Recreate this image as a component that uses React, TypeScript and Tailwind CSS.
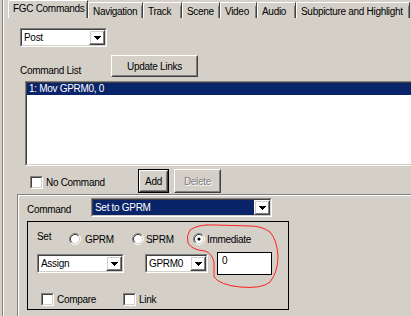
import React from 'react';

type BoxProps = { className?: string; children?: React.ReactNode };

const Raised = ({ className = '', children }: BoxProps) => (
    <div className={`border border-t-white border-l-white border-r-[#404040] border-b-[#404040] ${className}`}>
        <div className="w-full h-full border border-t-[#d4d0c8] border-l-[#d4d0c8] border-r-[#808080] border-b-[#808080] flex items-center justify-center">
            {children}
        </div>
    </div>
);

const Sunken = ({ className = '', children }: BoxProps) => (
    <div className={`border border-t-[#808080] border-l-[#808080] border-r-white border-b-white ${className}`}>
        <div className="w-full h-full border border-t-[#404040] border-l-[#404040] border-r-[#d4d0c8] border-b-[#d4d0c8] bg-white overflow-hidden">
            {children}
        </div>
    </div>
);

const Arrow = () => (
    <svg width="7" height="4" viewBox="0 0 7 4" shapeRendering="crispEdges">
        <rect x="0" y="0" width="7" height="1" fill="#000" />
        <rect x="1" y="1" width="5" height="1" fill="#000" />
        <rect x="2" y="2" width="3" height="1" fill="#000" />
        <rect x="3" y="3" width="1" height="1" fill="#000" />
    </svg>
);

const Combo = ({ className = '', text, selected = false }: { className?: string; text: string; selected?: boolean }) => (
    <Sunken className={className}>
        <div className="flex h-full">
            <div className={`flex-1 flex items-center pl-[2px] leading-[13px] ${selected ? 'bg-[#0a246a] text-white' : ''}`}>{text}</div>
            <Raised className="w-[16px] h-full shrink-0">
                <Arrow />
            </Raised>
        </div>
    </Sunken>
);

const Check = () => <Sunken className="w-[13px] h-[13px] shrink-0" />;

const Radio = ({ checked = false }: { checked?: boolean }) => (
    <svg width="12" height="12" viewBox="0 0 12 12" className="shrink-0">
        <circle cx="6" cy="6" r="4.5" fill="#fff" />
        <path d="M2.11 9.89A5.5 5.5 0 0 1 9.89 2.11" stroke="#808080" fill="none" />
        <path d="M2.82 9.18A4.5 4.5 0 0 1 9.18 2.82" stroke="#404040" fill="none" />
        <path d="M9.89 2.11A5.5 5.5 0 0 1 2.11 9.89" stroke="#fff" fill="none" />
        <path d="M9.18 2.82A4.5 4.5 0 0 1 2.82 9.18" stroke="#d4d0c8" fill="none" />
        {checked && <circle cx="6" cy="6" r="1.6" fill="#000" />}
    </svg>
);

const Tab = ({ label, className = '', active = false }: { label: string; className?: string; active?: boolean }) => (
    <div className={`border-t border-l border-r border-t-white border-l-white border-r-[#404040] rounded-tl-[2px] ${active ? 'h-[18px] pt-[2px]' : 'h-[16px] pt-[3px]'} ${className}`}>
        <div className="h-full border-r border-r-[#808080] pl-[4px] leading-[11px] whitespace-nowrap">{label}</div>
    </div>
);

export default function App() {
    return (
        <div className="w-[411px] h-[316px] bg-[#d4d0c8] overflow-hidden relative flex text-[10px] tracking-[-0.3px] text-black font-[Liberation_Sans,Arial,sans-serif]">
            {/* left frame */}
            <div className="w-[6px] shrink-0 flex">
                <div className="w-[2px]" />
                <div className="w-px bg-[#808080]" />
                <div className="w-px bg-white" />
            </div>

            <div className="flex-1 flex flex-col min-w-0">
                {/* tabs */}
                <div className="h-[18px] flex items-end pl-[2px] shrink-0">
                    <Tab label="FGC Commands" className="w-[80px]" active />
                    <Tab label="Navigation" className="w-[55px]" />
                    <Tab label="Track" className="w-[39px]" />
                    <Tab label="Scene" className="w-[38px]" />
                    <Tab label="Video" className="w-[37px]" />
                    <Tab label="Audio" className="w-[39px]" />
                    <Tab label="Subpicture and Highlight" className="w-[114px]" />
                </div>

                <div className="flex-1 flex flex-col">
                    <Combo className="w-[87px] h-[19px] ml-[14px] mt-[10px]" text="Post" />

                    <div className="flex items-end mt-[8px] pl-[14px]">
                        <div className="w-[91px] h-[10px] mb-[1px] overflow-hidden flex items-end">
                            <div className="leading-[11px] shrink-0 whitespace-nowrap">Command List</div>
                        </div>
                        <Raised className="w-[87px] h-[22px]">Update Links</Raised>
                    </div>

                    <Sunken className="w-[420px] h-[85px] ml-[19px] mt-[4px]">
                        <div className="h-[12px] bg-[#0a246a] text-white leading-[12px] pl-[2px]">1: Mov GPRM0, 0</div>
                    </Sunken>

                    <div className="flex items-start h-[24px] mt-[3px]">
                        <div className="w-[108px] ml-[24px] mt-[7px] flex items-center gap-[3px]">
                            <Check />
                            <span className="leading-[13px]">No Command</span>
                        </div>
                        <div className="border border-black">
                            <Raised className="w-[29px] h-[22px]">Add</Raised>
                        </div>
                        <Raised className="w-[47px] h-[24px] ml-[5px]">
                            <span className="text-[#808080] [text-shadow:1px_1px_0_#fff]">Delete</span>
                        </Raised>
                    </div>

                    {/* command group */}
                    <div className="ml-[11px] mt-[1px] w-[420px] h-[200px] border-t border-l border-[#808080]">
                        <div className="w-full h-full border-t border-l border-white">
                            <div className="flex items-end mt-[2px] pl-[8px]">
                                <div className="w-[64px] leading-[11px] mb-[2px]">Command</div>
                                <Combo className="w-[181px] h-[19px]" text="Set to GPRM" selected />
                            </div>

                            <div className="ml-[8px] mt-[4px] w-[262px] h-[89px] border border-black">
                                <div className="flex items-center h-[12px] mt-[11px] pl-[9px]">
                                    <div className="w-[32px] leading-[11px] relative -top-[3px]">Set</div>
                                    <div className="w-[63px] flex items-center gap-[4px]">
                                        <Radio />
                                        <span className="leading-[11px]">GPRM</span>
                                    </div>
                                    <div className="w-[61px] flex items-center gap-[2px]">
                                        <Radio />
                                        <span className="leading-[11px]">SPRM</span>
                                    </div>
                                    <div className="flex items-center gap-[2px]">
                                        <Radio checked />
                                        <span className="leading-[11px]">Immediate</span>
                                    </div>
                                </div>

                                <div className="flex items-center h-[23px] mt-[7px] pl-[9px]">
                                    <Combo className="w-[87px] h-[19px]" text="Assign" />
                                    <Combo className="w-[63px] h-[19px] ml-[21px]" text="GPRM0" />
                                    <div className="w-[55px] h-[23px] ml-[9px] border border-black bg-white pl-[4px] pt-[2px] leading-[11px]">0</div>
                                </div>

                                <div className="flex items-center h-[13px] mt-[18px] pl-[13px]">
                                    <div className="w-[82px] flex items-center gap-[3px]">
                                        <Check />
                                        <span className="leading-[11px]">Compare</span>
                                    </div>
                                    <div className="flex items-center gap-[3px]">
                                        <Check />
                                        <span className="leading-[11px]">Link</span>
                                    </div>
                                </div>
                            </div>
                        </div>
                    </div>
                </div>
            </div>

            {/* red hand-drawn annotation */}
            <svg className="absolute left-0 top-0 pointer-events-none" width="411" height="316" viewBox="0 0 411 316">
                <path
                    d="M214 262 L214 277 Q220 285 240 287 Q262 289 270 282 Q278 272 278 256 Q277 240 270 232 Q262 226 250 226 L215 225 Q198 224 190 230 Q186 236 188 243 Q192 250 205 251 Q212 253 214 262"
                    stroke="#ff2020"
                    strokeWidth="1"
                    fill="none"
                />
            </svg>
        </div>
    );
}
